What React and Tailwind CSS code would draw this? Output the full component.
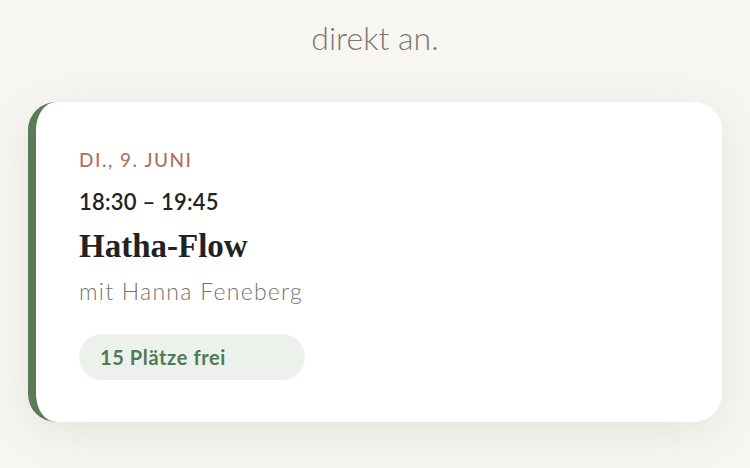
export default function App() {
  return (
    <div className="min-h-[468px] w-[750px] overflow-hidden bg-[#f7f6f2]" style={{ fontFamily: 'Lato, "Open Sans", sans-serif' }}>
      <div className="relative h-[102px]">
        <p className="absolute left-0 right-0 top-[16px] text-center text-[32px] leading-[44px] font-light text-[#7b7772]">
          direkt an.
        </p>
      </div>
      <div className="mx-[28px] rounded-[28px] border-l-[8px] border-[#5b7a55] bg-white pl-[43px] pt-[46px] pb-[42px] shadow-[0_10px_44px_rgba(120,110,90,0.13)]">
        <div className="text-[19px] leading-[24px] font-medium tracking-[0.08em] text-[#b0725d]">DI., 9. JUNI</div>
        <div className="mt-[16px] text-[22px] leading-[28px] font-semibold tracking-[0.01em] text-[#222]">18:30 – 19:45</div>
        <div className="mt-[11px] text-[33px] leading-[38px] font-bold text-[#222]" style={{ fontFamily: '"Liberation Serif", serif' }}>Hatha-Flow</div>
        <div className="mt-[12px] text-[23px] leading-[28px] font-light tracking-[0.055em] text-[#777470]">mit Hanna Feneberg</div>
        <div className="mt-[29px] flex h-[46px] w-[226px] items-center rounded-full bg-[#edf1ec] pl-[21px] text-[20px] font-bold tracking-[0.03em] text-[#4f7a56]">15 Plätze frei</div>
      </div>
    </div>
  );
}
